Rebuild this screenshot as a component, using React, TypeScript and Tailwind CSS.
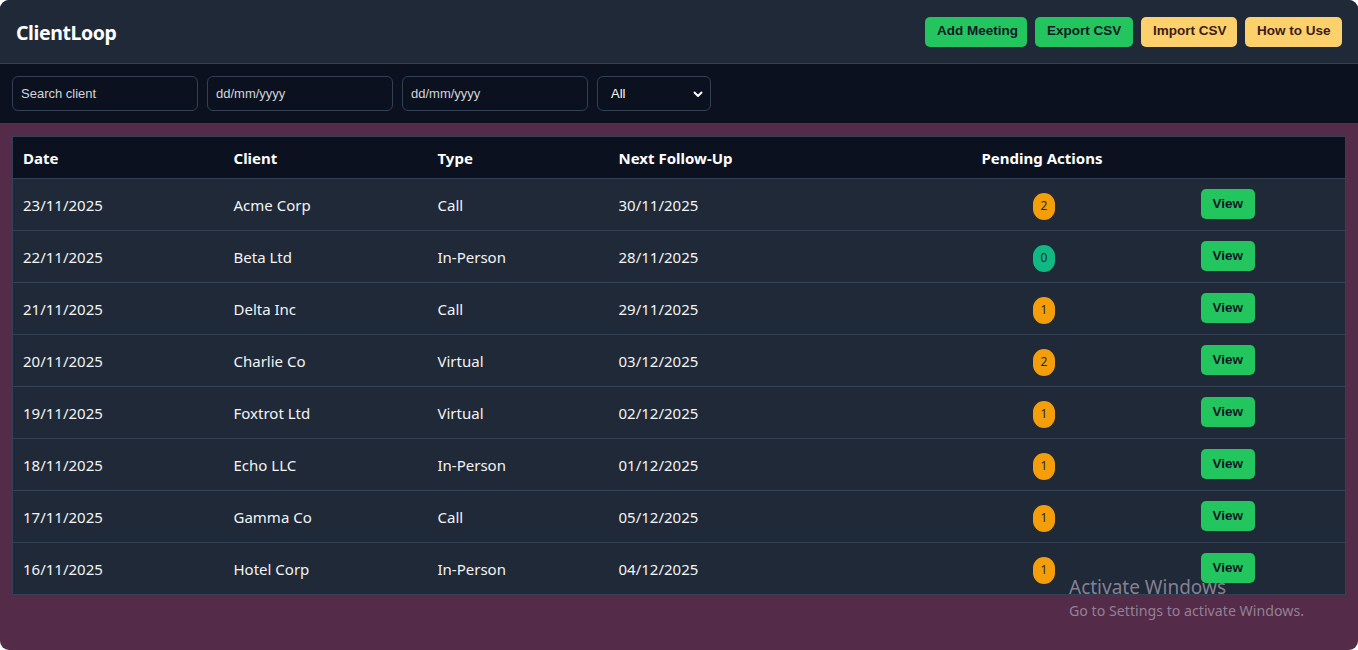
import React from 'react';

type Meeting = {
  date: string;
  client: string;
  type: string;
  next: string;
  pending: number;
};

const meetings: Meeting[] = [
  { date: '23/11/2025', client: 'Acme Corp', type: 'Call', next: '30/11/2025', pending: 2 },
  { date: '22/11/2025', client: 'Beta Ltd', type: 'In-Person', next: '28/11/2025', pending: 0 },
  { date: '21/11/2025', client: 'Delta Inc', type: 'Call', next: '29/11/2025', pending: 1 },
  { date: '20/11/2025', client: 'Charlie Co', type: 'Virtual', next: '03/12/2025', pending: 2 },
  { date: '19/11/2025', client: 'Foxtrot Ltd', type: 'Virtual', next: '02/12/2025', pending: 1 },
  { date: '18/11/2025', client: 'Echo LLC', type: 'In-Person', next: '01/12/2025', pending: 1 },
  { date: '17/11/2025', client: 'Gamma Co', type: 'Call', next: '05/12/2025', pending: 1 },
  { date: '16/11/2025', client: 'Hotel Corp', type: 'In-Person', next: '04/12/2025', pending: 1 },
];

const btn =
  "h-[30px] px-3 rounded-[5px] whitespace-nowrap text-[13.5px] font-bold font-['Liberation_Sans',Arial,sans-serif]";

const field =
  "h-[35px] rounded-[6px] border border-[#334155] bg-[#0b111e] text-[13px] text-[#e5e7eb] placeholder-[#d1d5db] outline-none font-['Liberation_Sans',Arial,sans-serif]";

export default function App() {
  return (
    <div className="w-[1358px] h-[650px] bg-white">
      <div className="relative w-full h-full rounded-[9px] overflow-hidden flex flex-col bg-[#542b48] font-['Noto_Sans','Open_Sans',sans-serif]">
        {/* Top bar */}
        <header className="h-[64px] shrink-0 flex items-center justify-between pl-4 pr-4 bg-[#1f2937] border-b border-[#334155]">
          <h1 className="text-[19.5px] font-bold text-white tracking-[-0.4px] mt-[2px]">ClientLoop</h1>
          <div className="flex items-center gap-2">
            <button className={`${btn} w-[102px] px-0 bg-[#22c55e] text-[#111827]`}>Add Meeting</button>
            <button className={`${btn} w-[98px] px-0 bg-[#22c55e] text-[#111827]`}>Export CSV</button>
            <button className={`${btn} w-[96px] px-0 bg-[#fcd06a] text-[#3a1c1c]`}>Import CSV</button>
            <button className={`${btn} w-[97px] px-0 bg-[#fcd06a] text-[#3a1c1c]`}>How to Use</button>
          </div>
        </header>

        {/* Filters */}
        <div className="h-[60px] shrink-0 flex items-center gap-[9px] px-3 bg-[#0b111e] border-b border-[#334155]">
          <input className={`${field} w-[186px] px-2`} placeholder="Search client" />
          <input className={`${field} w-[186px] px-2`} placeholder="dd/mm/yyyy" />
          <input className={`${field} w-[186px] px-2`} placeholder="dd/mm/yyyy" />
          <div className={`${field} w-[114px] pl-[13px] pr-[6px] flex items-center justify-between text-white`}>
            <span>All</span>
            <svg width="12" height="12" viewBox="0 0 24 24" fill="none" stroke="white" strokeWidth="4" strokeLinecap="round" strokeLinejoin="round">
              <path d="M5 9l7 7 7-7" />
            </svg>
          </div>
        </div>

        {/* Table */}
        <main className="flex-1 px-3 pt-3">
          <table className="w-[1334px] border-collapse border border-[#334155] text-[15px] text-white">
            <thead>
              <tr className="h-[42px] bg-[#0b111e] text-left font-bold">
                <th className="w-[211px] px-[10px] pt-[2px] font-bold">Date</th>
                <th className="w-[204px] px-[10px] pt-[2px] font-bold">Client</th>
                <th className="w-[181px] px-[10px] pt-[2px] font-bold">Type</th>
                <th className="w-[289px] px-[10px] pt-[2px] font-bold">Next Follow-Up</th>
                <th className="w-[293px] pl-[8px] pr-[12px] pt-[2px] font-bold text-center">Pending Actions</th>
                <th className="px-[10px]"></th>
              </tr>
            </thead>
            <tbody>
              {meetings.map((m, i) => (
                <tr key={i} className="h-[52px] bg-[#1f2937] border-t border-[#334155] text-[#f3f4f6]">
                  <td className="px-[10px] pt-[2px]">{m.date}</td>
                  <td className="px-[10px] pt-[2px]">{m.client}</td>
                  <td className="px-[10px] pt-[2px]">{m.type}</td>
                  <td className="px-[10px] pt-[2px]">{m.next}</td>
                  <td className="px-[10px] text-center">
                    <span
                      className={`inline-flex items-center justify-center w-[22px] h-[27px] mt-[3px] rounded-full text-[12px] text-[#1f2937] ${
                        m.pending === 0 ? 'bg-[#10b981]' : 'bg-[#f59e0b]'
                      }`}
                    >
                      {m.pending}
                    </span>
                  </td>
                  <td className="px-[10px]">
                    <button className={`${btn} w-[54px] px-0 bg-[#22c55e] text-[#111827] -mt-[1px]`}>View</button>
                  </td>
                </tr>
              ))}
            </tbody>
          </table>
        </main>

        {/* Windows watermark */}
        <div className="absolute left-[1069px] top-[576px] pointer-events-none text-[#a598ab]/80 font-['Noto_Sans',sans-serif] leading-tight">
          <div className="text-[19px]">Activate Windows</div>
          <div className="text-[14.2px] mt-[2px]">Go to Settings to activate Windows.</div>
        </div>
      </div>
    </div>
  );
}
